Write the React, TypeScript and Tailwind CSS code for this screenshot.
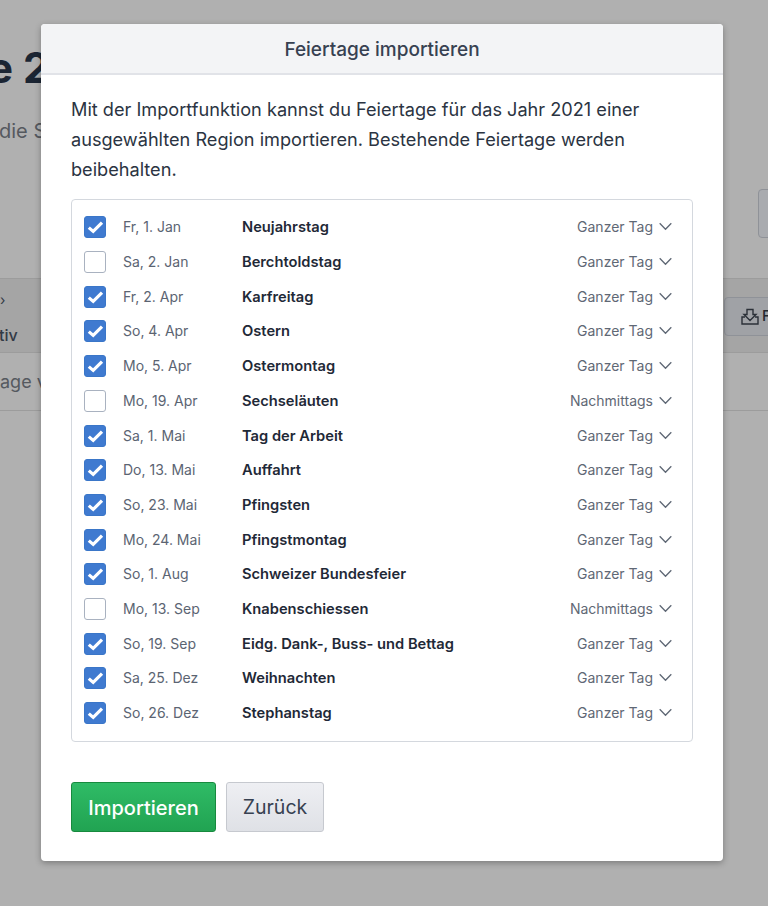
import React from 'react';

interface Holiday {
  date: string;
  name: string;
  duration: string;
  checked: boolean;
}

const holidays: Holiday[] = [
  { date: 'Fr, 1. Jan', name: 'Neujahrstag', duration: 'Ganzer Tag', checked: true },
  { date: 'Sa, 2. Jan', name: 'Berchtoldstag', duration: 'Ganzer Tag', checked: false },
  { date: 'Fr, 2. Apr', name: 'Karfreitag', duration: 'Ganzer Tag', checked: true },
  { date: 'So, 4. Apr', name: 'Ostern', duration: 'Ganzer Tag', checked: true },
  { date: 'Mo, 5. Apr', name: 'Ostermontag', duration: 'Ganzer Tag', checked: true },
  { date: 'Mo, 19. Apr', name: 'Sechseläuten', duration: 'Nachmittags', checked: false },
  { date: 'Sa, 1. Mai', name: 'Tag der Arbeit', duration: 'Ganzer Tag', checked: true },
  { date: 'Do, 13. Mai', name: 'Auffahrt', duration: 'Ganzer Tag', checked: true },
  { date: 'So, 23. Mai', name: 'Pfingsten', duration: 'Ganzer Tag', checked: true },
  { date: 'Mo, 24. Mai', name: 'Pfingstmontag', duration: 'Ganzer Tag', checked: true },
  { date: 'So, 1. Aug', name: 'Schweizer Bundesfeier', duration: 'Ganzer Tag', checked: true },
  { date: 'Mo, 13. Sep', name: 'Knabenschiessen', duration: 'Nachmittags', checked: false },
  { date: 'So, 19. Sep', name: 'Eidg. Dank-, Buss- und Bettag', duration: 'Ganzer Tag', checked: true },
  { date: 'Sa, 25. Dez', name: 'Weihnachten', duration: 'Ganzer Tag', checked: true },
  { date: 'So, 26. Dez', name: 'Stephanstag', duration: 'Ganzer Tag', checked: true },
];

const CheckBox = ({ checked }: { checked: boolean }) =>
  checked ? (
    <div className="w-[22px] h-[22px] shrink-0 rounded-[3px] bg-[#3f7ad0] border border-[#3a76c8] flex items-center justify-center">
      <svg width="17" height="14" viewBox="0 0 17 14" fill="none">
        <path d="M1.8 7.6L6.2 11.4L15 2.6" stroke="white" strokeWidth="3.2" />
      </svg>
    </div>
  ) : (
    <div className="w-[22px] h-[22px] shrink-0 rounded-[3px] bg-white border border-[#a9b2c0]" />
  );

// page behind the dimmed overlay, only its edges stay visible
const BackgroundPage = () => (
  <div className="h-[906px] overflow-hidden bg-[#b0b0b0] text-[#1c2430]">
    <div className="h-[278px] relative">
      <div className="pt-[38px] text-[42px] leading-[60px] font-bold whitespace-nowrap ml-[-12px] text-[#1b2533]">e 2021</div>
      <div className="pt-[18px] text-[20px] leading-[30px] text-[#55595f] whitespace-nowrap ml-[-1px]">die S</div>
      <div className="absolute left-[758px] top-[189px] w-[40px] h-[49px] rounded-[4px] border border-[#8f9298] bg-[#a9abaf]" />
    </div>
    <div className="h-[75px] border-y border-[#9c9c9c] bg-[#a5a5a5] relative">
      <div className="absolute left-0 top-[14px] text-[14px] leading-[14px] text-[#333a45]">›</div>
      <div className="pt-[38px] text-[16px] font-medium text-[#333a45] leading-[36px] ml-[-1px]">tiv</div>
      <div className="absolute left-[724px] top-[18px] w-[60px] h-[39px] rounded-[4px] border border-[#8f9298] bg-[#a0a2a6] flex items-center pl-[15px] gap-[2px] text-[#23282f] text-[15px] font-medium">
        <svg width="20" height="18" viewBox="0 0 20 18" fill="none" stroke="#2b3038" strokeWidth="1.4">
          <path d="M7 1.5h6v5h3l-6 6-6-6h3z" />
          <path d="M5 9H2v7h16V9h-3" />
        </svg>
        <span>F</span>
      </div>
    </div>
    <div className="h-[58px] border-b border-[#9c9c9c] text-[18px] leading-[58px] text-[#55595f] whitespace-nowrap">age v</div>
  </div>
);

const HolidayRow = ({ holiday }: { holiday: Holiday }) => (
  <div className="h-[34.71px] flex items-center pl-[12px] pr-[20px]">
    <CheckBox checked={holiday.checked} />
    <span className="w-[119px] ml-[17px] text-[14px] leading-[20px] -translate-y-[0.5px] text-[#5b6472] whitespace-nowrap">{holiday.date}</span>
    <span className="text-[14.7px] leading-[20px] -translate-y-[0.5px] font-semibold text-[#1f2937] whitespace-nowrap">{holiday.name}</span>
    <span className="ml-auto flex items-center gap-[6px] text-[14px] leading-[20px] -translate-y-[0.5px] text-[#5f6875] whitespace-nowrap">
      {holiday.duration}
      <svg width="13" height="8" viewBox="0 0 13 8" fill="none" stroke="#5f6875" strokeWidth="1.3">
        <path d="M0.7 0.8L6.5 6.8L12.3 0.8" />
      </svg>
    </span>
  </div>
);

export default function App() {
  return (
    <div className="relative w-[768px] h-[906px] overflow-hidden font-['Inter',sans-serif]">
      <BackgroundPage />

      {/* Modal */}
      <div className="absolute left-[41px] top-[24px] w-[682px] h-[837px] bg-white rounded-[4px] shadow-[0_2px_6px_rgba(0,0,0,0.3)] overflow-hidden">
        <div className="h-[51px] pt-[3px] bg-[#f3f4f6] border-b-2 border-[#e1e3e8] flex items-center justify-center text-[19px] font-medium text-[#374151]">
          Feiertage importieren
        </div>

        <div className="px-[30px] pt-[19px]">
          <p className="text-[18.15px] leading-[30px] text-[#2b3442]">
            Mit der Importfunktion kannst du Feiertage für das Jahr 2021 einer ausgewählten Region importieren. Bestehende Feiertage werden beibehalten.
          </p>

          <div className="mt-[15px] h-[543px] border border-[#d4d8de] rounded-[4px] py-[10px]">
            {holidays.map((h) => (
              <HolidayRow key={h.date} holiday={h} />
            ))}
          </div>

          <div className="mt-[40px] flex gap-[10px]">
            <button className="h-[50px] w-[145px] pt-[2px] rounded-[3px] border border-[#178a3e] bg-gradient-to-b from-[#2fbb66] to-[#21a352] text-white text-[20px] font-medium">
              Importieren
            </button>
            <button className="h-[50px] w-[98px] pt-[2px] rounded-[3px] border border-[#c6c9cf] bg-gradient-to-b from-[#eeeff3] to-[#dfe1e6] text-[#374151] text-[19.5px]">
              Zurück
            </button>
          </div>
        </div>
      </div>
    </div>
  );
}
